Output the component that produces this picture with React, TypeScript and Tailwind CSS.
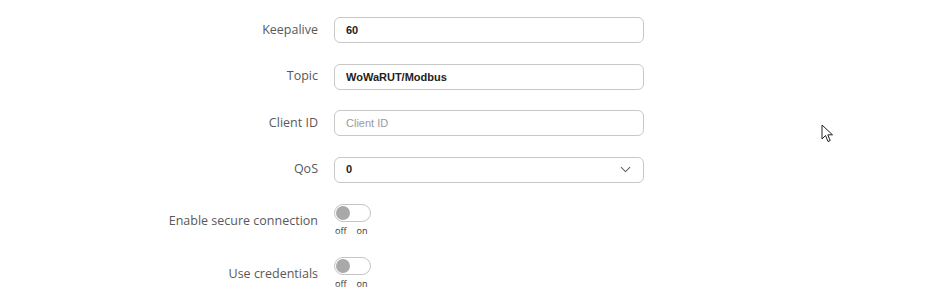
import { ChevronDown } from 'lucide-react';

const labelCls = "w-[318px] text-right text-[12.5px] text-[#595959] font-['Open_Sans',sans-serif]";
const inputCls =
  "w-[310px] h-[26px] rounded-[6px] border border-[#c8c8c8] bg-white px-[11px] text-[11px] font-bold text-[#222] font-['Liberation_Sans',Arial,sans-serif] outline-none placeholder:font-normal placeholder:text-[#9a9a9a]";

function TextRow({ label, value, placeholder }: { label: string; value?: string; placeholder?: string }) {
  return (
    <div className="flex items-center gap-4 h-[26px]">
      <label className={labelCls}>{label}</label>
      <input className={inputCls} defaultValue={value} placeholder={placeholder} />
    </div>
  );
}

function ToggleRow({ label }: { label: string }) {
  return (
    <div className="flex items-start gap-4">
      <label className={`${labelCls} leading-[17px] pt-[8px]`}>{label}</label>
      <div className="flex flex-col">
        <div className="w-[37px] h-[18px] rounded-full border border-[#c4c4c4] bg-white flex items-center px-[1px]">
          <div className="w-[14px] h-[14px] rounded-full bg-[#a9a9a9]" />
        </div>
        <div className="flex gap-[10px] pl-[1px] mt-[4px] text-[9px] leading-[10px] text-[#333] font-['Open_Sans',sans-serif]">
          <span>off</span>
          <span>on</span>
        </div>
      </div>
    </div>
  );
}

export default function App() {
  return (
    <div className="relative w-[945px] h-[304px] bg-white overflow-hidden">
      <div className="flex flex-col pt-[17px]">
        <div className="flex flex-col gap-[20.5px]">
          <TextRow label="Keepalive" value="60" />
          <TextRow label="Topic" value="WoWaRUT/Modbus" />
          <TextRow label="Client ID" placeholder="Client ID" />
          <div className="flex items-center gap-4 h-[26px]">
            <label className={labelCls}>QoS</label>
            <div className="w-[310px] h-[26px] rounded-[6px] border border-[#c8c8c8] bg-white pl-[11px] pr-[9px] flex items-center justify-between">
              <span className="text-[11px] font-bold text-[#222] font-['Liberation_Sans',Arial,sans-serif]">0</span>
              <ChevronDown className="w-[17px] h-[17px] text-[#666]" strokeWidth={1.5} />
            </div>
          </div>
        </div>
        <div className="flex flex-col gap-[21px] mt-[21px]">
          <ToggleRow label="Enable secure connection" />
          <ToggleRow label="Use credentials" />
        </div>
      </div>

      {/* mouse pointer */}
      <svg className="absolute left-[821px] top-[124px]" width="14" height="20" viewBox="0 0 14 20">
        <path
          d="M1 1 L1 15 L4.5 11.5 L7 17.5 L9.2 16.6 L6.8 10.8 L11.5 10.8 Z"
          fill="white"
          stroke="#222"
          strokeWidth="1"
          strokeLinejoin="round"
        />
      </svg>
    </div>
  );
}
